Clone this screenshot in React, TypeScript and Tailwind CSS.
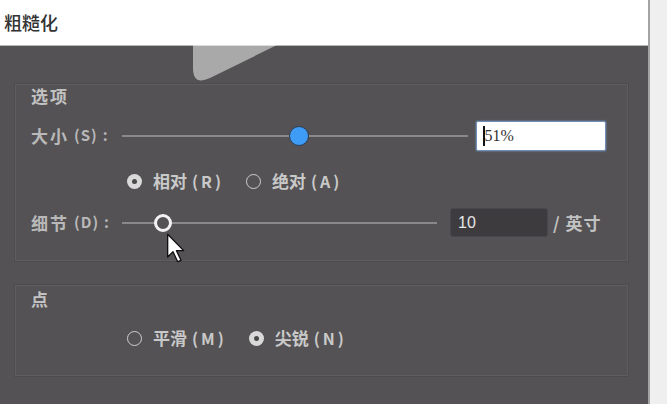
import React from 'react';

const labelFont = { fontFamily: '"Noto Sans CJK SC", "Noto Sans", sans-serif' };

const Radio = ({ checked }: { checked?: boolean }) =>
  checked ? (
    <span className="flex h-[15px] w-[15px] items-center justify-center rounded-full bg-[#d9d9d9]">
      <span className="h-[5px] w-[5px] rounded-full bg-[#4a484a]" />
    </span>
  ) : (
    <span className="h-[15px] w-[15px] rounded-full border-[1.5px] border-[#cfcfcf]" />
  );

const RadioOption = ({ label, hint, checked }: { label: string; hint: string; checked?: boolean }) => (
  <div className="flex items-center">
    <Radio checked={checked} />
    <span className="ml-[11px] text-[17px] font-bold text-[#c9c9c9]">{label}</span>
    <span className="ml-[5px] text-[16px] font-bold tracking-[3px] text-[#c9c9c9]">{hint}</span>
  </div>
);

const FieldLabel = ({ label, hint }: { label: string; hint: string }) => (
  <div className="flex w-[91px] shrink-0 items-center text-[#b9b9b9]">
    <span className="text-[17px] font-bold tracking-[2px]">{label}</span>
    <span className="ml-[5px] text-[15px] font-bold tracking-[1px]">{hint}</span>
    <span className="ml-[5px] text-[15px] font-bold">:</span>
  </div>
);

const Cursor = () => (
  <svg width="22" height="32" viewBox="0 0 16 24" className="absolute left-[9px] top-[16px]">
    <path d="M1 1 L1 18 L5 14 L8.5 21.5 L11 20.5 L7.6 13.2 L13 13.2 Z" fill="#fff" stroke="#111" strokeWidth="1" strokeLinejoin="round" />
  </svg>
);

export default function App() {
  return (
    <div className="relative flex h-[404px] w-[667px] overflow-hidden bg-[#ececec]" style={labelFont}>
      <div className="flex w-[648px] flex-col">
        {/* title */}
        <div className="flex h-[46px] shrink-0 items-center border-b border-[#b8b8b8] bg-white pl-[4px]">
          <span className="text-[18px] font-medium text-[#333]">粗糙化</span>
        </div>

        {/* body */}
        <div className="flex-1 bg-[#545254] pl-[15px] pr-[20px] pt-[38px]">
          {/* 选项 */}
          <div className="h-[177px] border border-[#5f5d5f] pl-[15px] shadow-[0_0_0_1px_#4d4b4d]">
            <div className="flex h-[22px] items-center text-[17px] font-bold tracking-[2px] text-[#c2c2c2]">选项</div>

            <div className="mt-[13px] flex h-[31px] items-center">
              <FieldLabel label="大小" hint="(S)" />
              <div className="relative h-[2px] w-[346px] bg-[#8a898a]">
                <span className="absolute left-[167px] top-[-9px] h-[20px] w-[20px] rounded-full border-[1.5px] border-[#2e3c50] bg-[#3f9cf6]" />
              </div>
              <div className="ml-[8px] flex h-[30px] w-[130px] items-center rounded-[2px] border border-[#6f8fb8] bg-white pl-[6px] shadow-[0_0_2px_#7fa6d6]">
                <span className="h-[20px] w-[1.5px] bg-[#111]" />
                <span className="text-[16px] text-[#333]" style={{ fontFamily: '"Liberation Serif", serif' }}>51%</span>
              </div>
            </div>

            <div className="mt-[19px] flex h-[22px] items-center gap-[22px] pl-[96px]">
              <RadioOption label="相对" hint="(R)" checked />
              <RadioOption label="绝对" hint="(A)" />
            </div>

            <div className="mt-[16px] flex h-[29px] items-center">
              <FieldLabel label="细节" hint="(D)" />
              <div className="relative h-[2px] w-[315px] bg-[#8a898a]">
                <span className="absolute left-[32px] top-[-8px] h-[18px] w-[18px] rounded-full border-[3px] border-[#f2f2f2] bg-[#545254]">
                  <Cursor />
                </span>
              </div>
              <div className="ml-[13px] flex h-[29px] w-[98px] items-center rounded-[3px] border border-[#48464a] bg-[#3d3b3e] pl-[7px]">
                <span className="text-[16px] text-[#e6e6e6]" style={{ fontFamily: '"Liberation Sans", sans-serif' }}>10</span>
              </div>
              <span className="ml-[5px] text-[17px] font-bold tracking-[1px] text-[#c2c2c2]">/ 英寸</span>
            </div>
          </div>

          {/* 点 */}
          <div className="mt-[24px] h-[91px] border border-[#5f5d5f] pl-[15px] shadow-[0_0_0_1px_#4d4b4d]">
            <div className="mt-[2px] flex h-[22px] items-center text-[17px] font-bold text-[#c2c2c2]">点</div>
            <div className="mt-[17px] flex h-[22px] items-center gap-[22px] pl-[96px]">
              <RadioOption label="平滑" hint="(M)" />
              <RadioOption label="尖锐" hint="(N)" checked />
            </div>
          </div>
        </div>
      </div>
      <div className="w-[2px] bg-[#a3a3a3]" />
      <div className="flex-1 bg-[#efefef]" />

      {/* video play overlay */}
      <svg className="pointer-events-none absolute left-0 top-0" width="667" height="404">
        <path d="M193 -80 L193 68 Q193 86 210 78 L330 19 Z" fill="#fff" fillOpacity="0.5" />
      </svg>
    </div>
  );
}
